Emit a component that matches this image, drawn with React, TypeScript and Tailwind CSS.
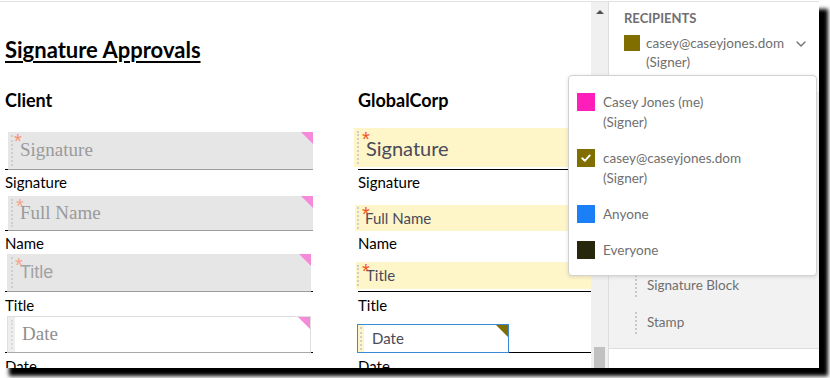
import { ChevronDown } from 'lucide-react';

// small triangle in the top-right corner of a form field
function Corner({ color }: { color: string }) {
  return <span className={`absolute right-0 top-0 h-3 w-3 [clip-path:polygon(0_0,100%_0,100%_100%)] ${color}`} />;
}

function Dots({ className = '' }: { className?: string }) {
  return <span className={`w-0 self-stretch border-l-2 border-dotted border-[#cfcfcf] ${className}`} />;
}

function Label({ text, className = '' }: { text: string; className?: string }) {
  return <div className={`h-[18px] text-[15px] leading-[18px] text-black ${className}`}>{text}</div>;
}

function Swatch({ color, checked }: { color: string; checked?: boolean }) {
  return (
    <span className={`mt-px flex h-[18px] w-[18px] shrink-0 items-center justify-center ${color}`}>
      {checked && (
        <svg viewBox="0 0 12 12" className="h-3 w-3">
          <path d="M2.2 6.3 4.8 8.8 9.8 3.4" fill="none" stroke="#fff" strokeWidth="1.9" strokeLinecap="round" strokeLinejoin="round" />
        </svg>
      )}
    </span>
  );
}

export default function App() {
  return (
    <div className="h-[378px] w-[830px] overflow-hidden bg-white pt-px font-[Lato,sans-serif]">
      <div className="relative flex h-[367px] w-[819px] border-t border-[#e2e2e2] bg-white shadow-[9px_8px_4px_#000]">
        {/* document */}
        <div className="w-[591px] overflow-hidden pl-[5px] pt-[35px]">
          <h1 className="h-[26px] text-[22px] font-bold leading-[26px] text-black underline decoration-2 underline-offset-[3px]">
            Signature Approvals
          </h1>
          <div className="mt-[27px] flex gap-[41px]">
            {/* client column */}
            <div className="flex w-[308px] flex-col">
              <h2 className="h-5 text-[18px] font-bold leading-5 text-black">Client</h2>

              <div className="mt-[22px] border-b border-black">
                <div className="relative z-10 -mb-px ml-[3px] flex h-[38px] items-center border-b border-[#9c9c9c] bg-[#e6e6e6]">
                  <Dots className="my-[3px] ml-[3px]" />
                  <span className="absolute left-[6px] top-[-1px] font-['Liberation_Sans',sans-serif] text-[20px] leading-none text-[#f6926f]">*</span>
                  <span className="ml-[7px] font-['Liberation_Serif',serif] text-[19px] text-[#9a9a9a]">Signature</span>
                  <Corner color="bg-[#f58ad9]" />
                </div>
              </div>
              <Label text="Signature" className="mt-[3px]" />

              <div className="mt-[5px] border-b border-black">
                <div className="relative z-10 -mb-px ml-[3px] flex h-[35px] items-center border-b border-[#9c9c9c] bg-[#e6e6e6]">
                  <Dots className="my-[3px] ml-[3px]" />
                  <span className="absolute left-[8px] top-0 font-['Liberation_Sans',sans-serif] text-[20px] leading-none text-[#f6a48a]">*</span>
                  <span className="ml-[7px] font-['Liberation_Serif',serif] text-[19px] text-[#9a9a9a]">Full Name</span>
                  <Corner color="bg-[#f58ad9]" />
                </div>
              </div>
              <Label text="Name" className="mt-[3px]" />

              <div className="mt-[2px] border-b border-black">
                <div className="relative z-10 -mb-px ml-[2px] mr-[2px] flex h-[38px] items-center border-b border-[#9c9c9c] bg-[#e6e6e6]">
                  <Dots className="my-[3px] ml-[4px]" />
                  <span className="absolute left-[8px] top-px font-['Liberation_Sans',sans-serif] text-[20px] leading-none text-[#f6a48a]">*</span>
                  <span className="ml-[7px] font-['Liberation_Sans',sans-serif] text-[18px] text-[#a3a3a3]">Title</span>
                  <Corner color="bg-[#f58ad9]" />
                </div>
              </div>
              <Label text="Title" className="mt-[4px]" />

              <div className="mt-[2px] border-b border-black">
                <div className="relative z-10 -mb-px ml-[2px] mr-[2px] flex h-[37px] items-stretch border border-[#dedede] border-b-[#a8a8a8] bg-white">
                  <span className="flex w-[7px] justify-center bg-[#eeeeee]">
                    <Dots className="my-[3px] border-[#dadada]" />
                  </span>
                  <span className="ml-[7px] self-center font-['Liberation_Serif',serif] text-[19px] text-[#8e8e8e]">Date</span>
                  <Corner color="bg-[#f58ad9]" />
                </div>
              </div>
              <Label text="Date" className="mt-[4px]" />
            </div>

            {/* globalcorp column */}
            <div className="flex w-[237px] flex-col">
              <h2 className="h-5 pl-[4px] text-[18px] font-bold leading-5 text-black">GlobalCorp</h2>

              <div className="relative mt-[18px] flex h-[39px] items-center bg-[#fef5c9]">
                <Dots className="my-[3px] ml-[3px]" />
                <span className="absolute left-[8px] top-px font-['Liberation_Sans',sans-serif] text-[20px] leading-none text-[#f0521f]">*</span>
                <span className="ml-[7px] text-[20px] text-[#4a4a58]">Signature</span>
              </div>
              <div className="ml-[4px] mt-[2px] h-px bg-black" />
              <Label text="Signature" className="mt-[3px] pl-[4px]" />

              <div className="relative ml-px mt-[14px] flex h-[26px] items-center bg-[#fef5c9]">
                <Dots className="my-[2px] ml-[2px]" />
                <span className="absolute left-[7px] top-[-1px] font-['Liberation_Sans',sans-serif] text-[20px] leading-none text-[#f0521f]">*</span>
                <span className="ml-[6px] text-[15px] text-[#4a4a58]">Full Name</span>
              </div>
              <Label text="Name" className="mt-[3px] pl-[4px]" />

              <div className="relative ml-[2px] mt-[10px] flex h-[27px] items-center bg-[#fef5c9]">
                <Dots className="my-[3px] ml-px" />
                <span className="absolute left-[6px] top-[-1px] font-['Liberation_Sans',sans-serif] text-[20px] leading-none text-[#f0521f]">*</span>
                <span className="ml-[7px] text-[15px] text-[#4a4a58]">Title</span>
              </div>
              <div className="ml-[4px] mt-[2px] h-px bg-black" />
              <Label text="Title" className="mt-[4px] pl-[4px]" />

              <div className="mt-[10px] ml-[4px] border-b border-black">
                <div className="relative z-10 -mb-px -ml-px flex h-[29px] w-[152px] items-stretch border border-[#3a8ad6] bg-white">
                  <span className="flex w-[6px] justify-center bg-[#fef5c9]">
                    <Dots className="my-[2px]" />
                  </span>
                  <span className="ml-[8px] self-center text-[15px] text-[#4a4a58]">Date</span>
                  <Corner color="bg-[#806e00]" />
                </div>
              </div>
              <Label text="Date" className="mt-[4px] pl-[4px]" />
            </div>
          </div>
        </div>

        {/* scrollbar */}
        <div className="flex w-[17px] flex-col items-center justify-between bg-[#f0f0f0]">
          <span className="mt-[8px] h-0 w-0 border-x-[4px] border-b-[4px] border-x-transparent border-b-[#505050]" />
          <span className="h-[21px] w-[11px] bg-[#c1c1c1]" />
        </div>

        {/* right panel */}
        <div className="flex w-[211px] flex-col border-l border-[#dddddd] text-[#6f6f6f]">
          <div className="bg-white pl-[15px] pr-[10px] pt-[8px] pb-[20px]">
            <div className="h-4 text-[13px] font-bold leading-4">RECIPIENTS</div>
            <div className="mt-[8px] flex items-start gap-[6px]">
              <span className="mt-px h-4 w-4 shrink-0 bg-[#806e00]" />
              <div className="flex-1 text-[13.5px] leading-[19px]">
                <div>casey@caseyjones.dom</div>
                <div>(Signer)</div>
              </div>
              <ChevronDown className="mt-[2px] h-4 w-4" strokeWidth={2} />
            </div>
          </div>
          <div className="flex flex-1 flex-col justify-end bg-[#f2f2f2]">
            {['Signature Block', 'Stamp'].map((t) => (
              <div key={t} className="flex h-[37px] items-center pl-[26px] text-[13.5px]">
                <span className="mr-[10px] h-[22px] w-0 border-l-2 border-dotted border-[#c8c8c8]" />
                {t}
              </div>
            ))}
            <div className="mt-[7px] h-[20px] border-t border-[#dddddd] bg-white" />
          </div>
        </div>

        {/* recipient dropdown */}
        <div className="absolute left-[568px] top-[73px] flex h-[201px] w-[249px] flex-col gap-4 rounded-[4px] border border-[#d2d2d2] bg-white pl-2 pt-4 text-[13.5px] leading-5 text-[#6f6f6f] shadow-[0_1px_4px_rgba(0,0,0,0.12)]">
          <div className="flex items-start gap-2">
            <Swatch color="bg-[#ff1eb9]" />
            <div>
              <div>Casey Jones (me)</div>
              <div>(Signer)</div>
            </div>
          </div>
          <div className="flex items-start gap-2">
            <Swatch color="bg-[#806e00]" checked />
            <div>
              <div>casey@caseyjones.dom</div>
              <div>(Signer)</div>
            </div>
          </div>
          <div className="flex items-start gap-2">
            <Swatch color="bg-[#1b80f8]" />
            <div>Anyone</div>
          </div>
          <div className="flex items-start gap-2">
            <Swatch color="bg-[#27270b]" />
            <div>Everyone</div>
          </div>
        </div>
      </div>
    </div>
  );
}
